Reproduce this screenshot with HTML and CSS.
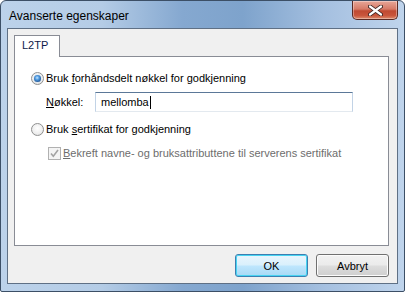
FILE: index.html
```html
<!DOCTYPE html>
<html>
<head>
<meta charset="utf-8">
<link rel="stylesheet" href="styles.css">
</head>
<body>
<div class="window">
  <div class="titlebar">
    <span class="title">Avanserte egenskaper</span>
    <div class="close">
      <svg width="15" height="11" viewBox="0 0 15 11">
        <path d="M2 1.5 L13 9.5 M13 1.5 L2 9.5" stroke="#3b2320" stroke-width="4" stroke-linecap="round"/>
        <path d="M2 1.5 L13 9.5 M13 1.5 L2 9.5" stroke="#ffffff" stroke-width="2.2" stroke-linecap="round"/>
      </svg>
    </div>
  </div>
  <div class="client">
    <div class="tabs">
      <div class="tab">L2TP</div>
    </div>
    <div class="panel">
      <div class="row row1">
        <span class="radio checked"></span>
        <span class="label">Bruk <u>f</u>orhåndsdelt nøkkel for godkjenning</span>
      </div>
      <div class="row row2">
        <span class="label keylabel"><u>N</u>økkel:</span>
        <div class="input">mellomba<span class="caret"></span></div>
      </div>
      <div class="row row3">
        <span class="radio"></span>
        <span class="label">Bruk <u>s</u>ertifikat for godkjenning</span>
      </div>
      <div class="row row4">
        <span class="check">
          <svg width="11" height="11" viewBox="0 0 11 11">
            <path d="M2 5.5 L4.3 8.2 L9 2" fill="none" stroke="#a3a3a3" stroke-width="1.6"/>
          </svg>
        </span>
        <span class="label disabled"><u>B</u>ekreft navne- og bruksattributtene til serverens sertifikat</span>
      </div>
    </div>
    <div class="buttons">
      <div class="btn default">OK</div>
      <div class="btn">Avbryt</div>
    </div>
  </div>
</div>
</body>
</html>
```
FILE: styles.css
```css
* { box-sizing: border-box; }
html, body { margin: 0; padding: 0; }
body { width: 405px; height: 292px; overflow: hidden; background: #ffffff; }

.window {
  width: 405px;
  height: 292px;
  border: 1px solid #3c4f66;
  border-radius: 6px 6px 2px 2px;
  background: linear-gradient(90deg, #bcd2ea 0%, #b4cce6 25%, #85a8d0 45%, #7ea3cc 60%, #a5c0e0 80%, #bfd4ec 100%);
  padding: 0 6px 7px 6px;
  display: flex;
  flex-direction: column;
  font-family: "Liberation Sans", Arial, sans-serif;
}

.titlebar {
  height: 28px;
  display: flex;
  align-items: flex-start;
  padding-left: 2px;
}
.title {
  font-family: "Liberation Sans", Arial, sans-serif;
  font-size: 12px;
  color: #000;
  margin-top: 8px;
  line-height: 14px;
}
.close {
  margin-left: auto;
  margin-right: 0;
  width: 46px;
  height: 19px;
  border: 1px solid #5a2a24;
  border-top: none;
  border-radius: 0 0 5px 5px;
  background: linear-gradient(180deg, #e7a798 0%, #d67a67 45%, #c04a32 55%, #c9553b 80%, #dd8b6c 100%);
  box-shadow: inset 0 0 0 1px rgba(255,255,255,0.35);
  display: flex;
  align-items: center;
  justify-content: center;
}

.client {
  flex: 1;
  background: #f0f0f0;
  border: 1px solid #5f7085;
  padding: 6px 8px 6px 6px;
  display: flex;
  flex-direction: column;
}

.tabs { display: flex; position: relative; z-index: 1; margin-bottom: -1px; }
.tab {
  width: 46px;
  height: 22px;
  background: #ffffff;
  border: 1px solid #898c95;
  border-bottom: none;
  font-size: 11px;
  color: #0d1a4a;
  padding: 3px 0 0 7px;
  line-height: 13px;
}

.panel {
  height: 190px;
  background: #ffffff;
  border: 1px solid #898c95;
  padding: 15px 0 0 16px;
  display: flex;
  flex-direction: column;
}

.row { display: flex; align-items: center; font-size: 11px; color: #000; }
.row1 { height: 13px; }
.row2 { height: 20px; margin-top: 7px; }
.row3 { height: 13px; margin-top: 11px; }
.row4 { height: 13px; margin-top: 11px; padding-left: 17px; }

.label { line-height: 13px; white-space: nowrap; }
.label u { text-decoration: underline; text-underline-offset: 1px; }
.disabled { color: #6d6d6d; }

.radio {
  width: 13px;
  height: 13px;
  border-radius: 50%;
  border: 1px solid #8f9090;
  background: radial-gradient(circle at 50% 40%, #ffffff 0%, #eeeeee 60%, #d4d4d4 100%);
  margin-right: 2px;
  flex: none;
  display: flex;
  align-items: center;
  justify-content: center;
}
.radio.checked::after {
  content: "";
  width: 7px;
  height: 7px;
  border-radius: 50%;
  background: radial-gradient(circle at 45% 40%, #c5e6ff 0%, #4f9ae0 35%, #1b4d8c 80%, #183d6f 100%);
  box-shadow: 0 0 1px #7ab6e8;
}

.keylabel { width: 49px; padding-left: 15px; box-sizing: content-box; }
.input {
  width: 258px;
  height: 20px;
  border: 1px solid #abadb3;
  border-top-color: #5b7898;
  border-left-color: #c2d3e6;
  border-right-color: #c2d3e6;
  border-bottom-color: #e3e9ef;
  padding: 0 0 0 5px;
  font-size: 11px;
  line-height: 18px;
  display: flex;
  align-items: center;
}
.caret { width: 1px; height: 13px; background: #000; margin-left: 1px; }

.check {
  width: 13px;
  height: 13px;
  border: 1px solid #b1b1b1;
  background: #f4f4f4;
  margin-right: 2px;
  flex: none;
  display: flex;
  align-items: center;
  justify-content: center;
}

.buttons {
  display: flex;
  justify-content: flex-end;
  gap: 8px;
  margin-top: 8px;
}
.btn {
  width: 73px;
  height: 23px;
  border: 1px solid #707070;
  border-radius: 3px;
  background: linear-gradient(180deg, #f2f2f2 0%, #ebebeb 48%, #dddddd 52%, #cfcfcf 100%);
  box-shadow: inset 0 0 0 1px #fcfcfc;
  font-size: 11px;
  display: flex;
  align-items: center;
  justify-content: center;
  color: #000;
}
.btn.default {
  border-color: #3c7fb1;
  background: linear-gradient(180deg, #eaf6fd 0%, #d9f0fc 48%, #bee6fd 52%, #a7d9f5 100%);
  box-shadow: inset 0 0 0 1px #48d4f2;
}
```
